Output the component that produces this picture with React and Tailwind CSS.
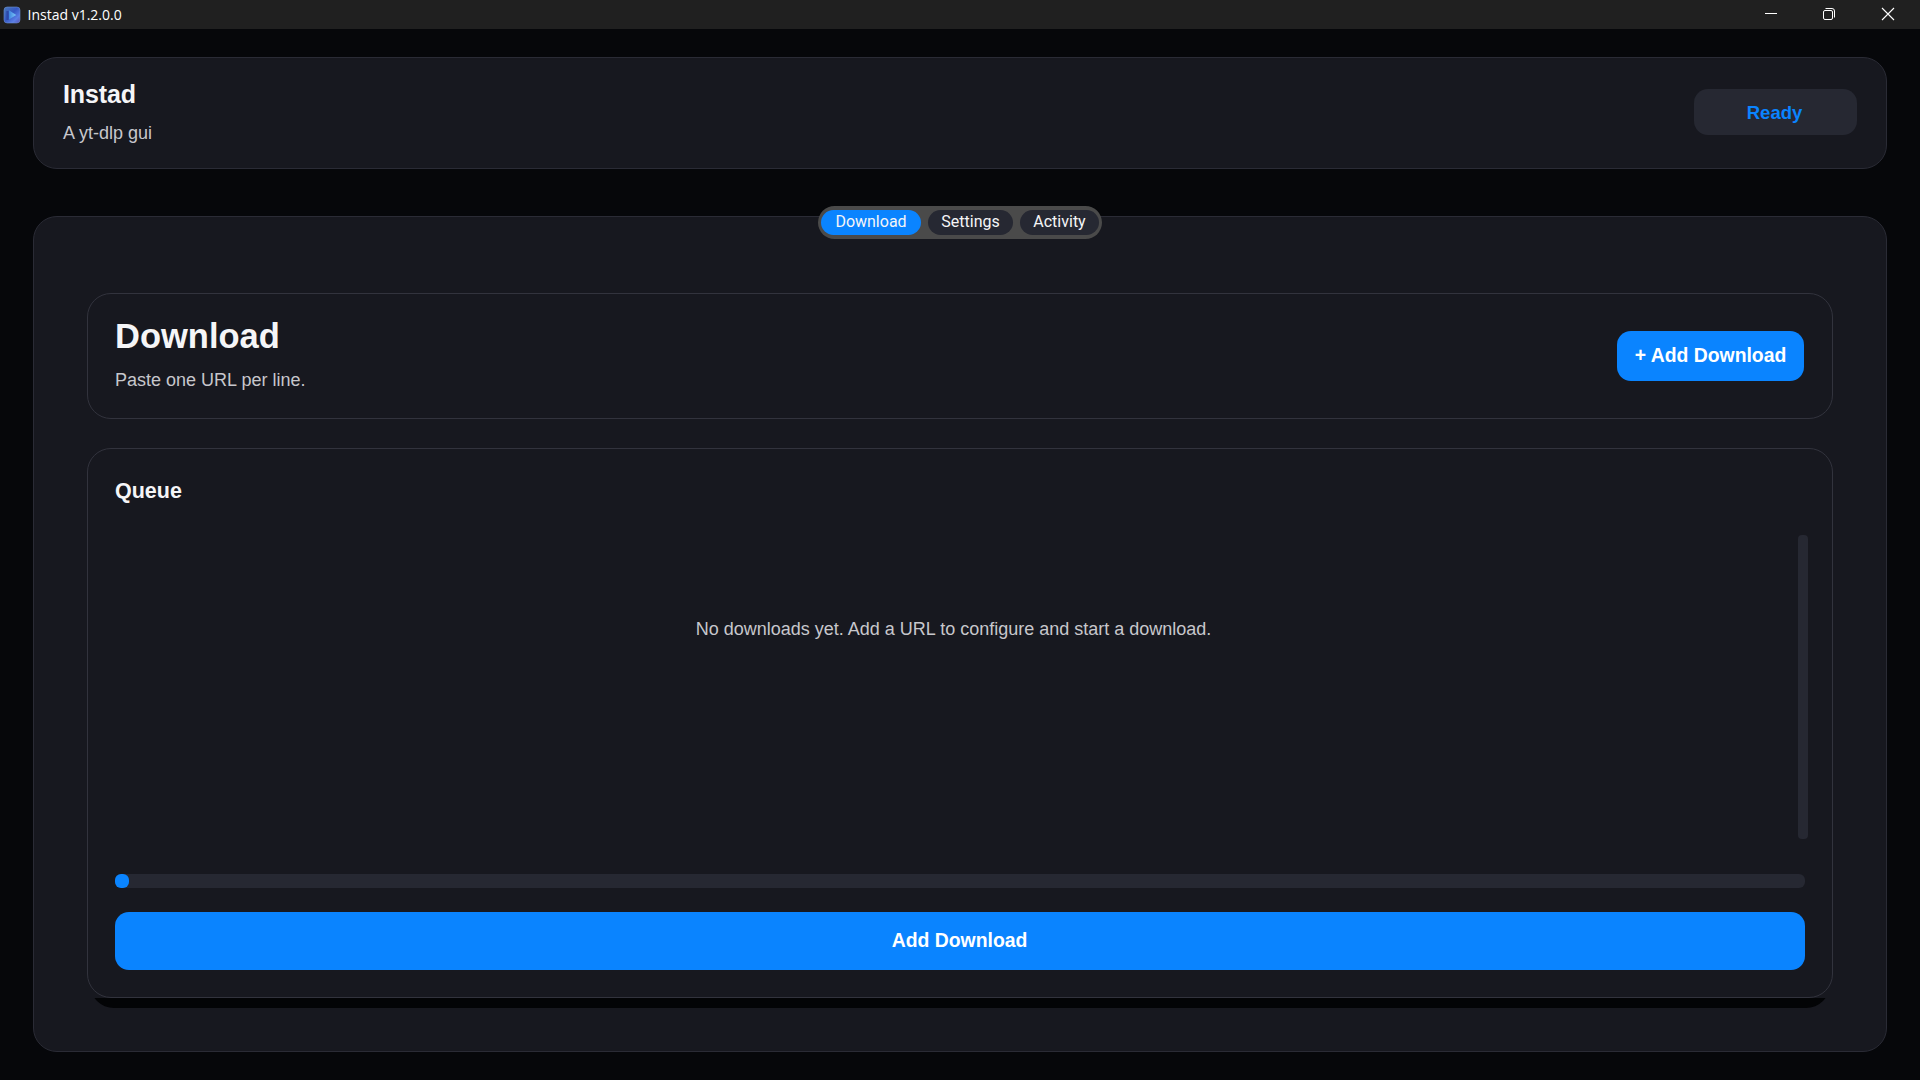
const ARIAL = "font-['Liberation_Sans',Arial,sans-serif]";

function AppIcon() {
  return (
    <svg width="18" height="18" viewBox="0 0 18 18">
      <defs>
        <linearGradient id="tile" x1="0" y1="0" x2="1" y2="1">
          <stop offset="0" stopColor="#4a78b8" />
          <stop offset="0.45" stopColor="#3558c4" />
          <stop offset="0.75" stopColor="#5b7fe6" />
          <stop offset="1" stopColor="#5a4fb4" />
        </linearGradient>
        <linearGradient id="play" x1="0" y1="0" x2="1" y2="0">
          <stop offset="0" stopColor="#3f86e0" />
          <stop offset="1" stopColor="#7cc8f8" />
        </linearGradient>
      </defs>
      <rect x="1" y="1" width="16" height="16" rx="3.2" fill="url(#tile)" stroke="#6d8fd0" strokeOpacity="0.6" />
      <path d="M4.5 5v9" stroke="#2b49a8" strokeWidth="2.2" />
      <path d="M6 4.2 13.2 9 6 13.4z" fill="url(#play)" />
    </svg>
  );
}

function TitleBar() {
  return (
    <div className="flex h-[29px] items-center bg-[#202020] pl-[3px]">
      <AppIcon />
      <span className="ml-[6.5px] whitespace-nowrap font-['Open_Sans','Noto_Sans',sans-serif] text-[14px] leading-[29px] text-white">
        Instad v1.2.0.0
      </span>
      <div className="ml-auto flex h-full">
        <svg width="59" height="29" fill="none" stroke="#fff">
          <path d="M24 13.5h12" />
        </svg>
        <svg width="58" height="29" fill="none" stroke="#fff">
          <rect x="23.5" y="10.5" width="9" height="9" rx="1.5" />
          <path d="M25.5 8.5h6.5a2.5 2.5 0 0 1 2.5 2.5v6.5" />
        </svg>
        <svg width="62" height="29" fill="none" stroke="#fff" strokeWidth="1.1">
          <path d="m24 8 12 12M36 8 24 20" />
        </svg>
      </div>
    </div>
  );
}

function Header() {
  return (
    <header className="mx-[33px] mt-7 flex h-28 justify-between rounded-[24px] border border-[#2a2b35] bg-[#17181f] pl-[29px] pr-[29px]">
      <div className="pt-[21px]">
        <h1 className="text-[25px] font-bold leading-[30px] tracking-[-0.1px] text-[#f5f5f7]">Instad</h1>
        <p className="mt-[12px] text-[18px] leading-[24px] text-[#c7c7cc]">A yt-dlp gui</p>
      </div>
      <div className="mt-[31px] h-[46px] w-[163px] rounded-[14px] bg-[#262832] pr-[2px] text-center text-[18.5px] font-bold leading-[47px] text-[#0a84ff]">
        Ready
      </div>
    </header>
  );
}

function Tabs() {
  return (
    <nav className="absolute left-1/2 top-[-11px] flex h-[33px] w-[284px] -translate-x-1/2 gap-[7px] rounded-full bg-[#4a4a4a] px-[3px] py-[4px] text-center font-[Roboto,sans-serif] text-[16px] leading-[24px] text-[#f5f5f7]">
      <div className="w-[100px] rounded-full bg-[#0a84ff]">Download</div>
      <div className="w-[85px] rounded-full bg-[#262832]">Settings</div>
      <div className="w-[79px] rounded-full bg-[#262832]">Activity</div>
    </nav>
  );
}

function DownloadCard() {
  return (
    <section className="flex h-[126px] items-start justify-between rounded-[24px] border border-[#32333d] pl-[27px] pr-[28px]">
      <div className="pt-[22px]">
        <h2 className="text-[34.5px] font-bold leading-[40px] text-[#f5f5f7]">Download</h2>
        <p className="mt-[12px] text-[18px] leading-[24px] text-[#c7c7cc]">Paste one URL per line.</p>
      </div>
      <button className="mt-[37px] h-[50px] w-[187px] whitespace-nowrap rounded-[14px] bg-[#0a84ff] pb-[2px] text-[19.4px] font-bold leading-[48px] text-white">
        + Add Download
      </button>
    </section>
  );
}

function QueueCard() {
  return (
    <section className="mt-[29px] flex h-[550px] flex-col rounded-[24px] border border-[#32333d] px-[27px]">
      <h3 className="mt-[29px] text-[21.5px] font-bold leading-[26px] text-[#f5f5f7]">Queue</h3>
      <div className="mr-[-3px] mt-[31px] flex h-[304px] justify-between">
        <p className="flex-1 pr-[6px] pt-[82px] text-center text-[18px] leading-[24px] text-[#c7c7cc]">
          No downloads yet. Add a URL to configure and start a download.
        </p>
        <div className="w-[10px] rounded-[4px] bg-[#262832]" />
      </div>
      <div className="mt-[35px] h-[14px] rounded-[6px] bg-[#262832]">
        <div className="h-full w-[14px] rounded-[6px] bg-[#0a84ff]" />
      </div>
      <button className="mt-6 h-[58px] rounded-[14px] bg-[#0a84ff] pb-[2px] pr-[1px] text-[19.4px] font-bold leading-[56px] text-white">
        Add Download
      </button>
    </section>
  );
}

export default function App() {
  return (
    <div className={"h-[1080px] w-[1920px] overflow-hidden bg-[#06070a] " + ARIAL}>
      <TitleBar />
      <Header />
      <main className="relative mx-[33px] mt-[47px] h-[836px] rounded-[24px] border border-[#2a2b35] bg-[#17181f] px-[53px] pt-[76px]">
        <Tabs />
        <DownloadCard />
        <QueueCard />
        <div className="mx-[3px] flex h-[10px] flex-col justify-end overflow-hidden">
          <div className="h-[60px] shrink-0 rounded-[24px] bg-[#030406]" />
        </div>
      </main>
    </div>
  );
}
